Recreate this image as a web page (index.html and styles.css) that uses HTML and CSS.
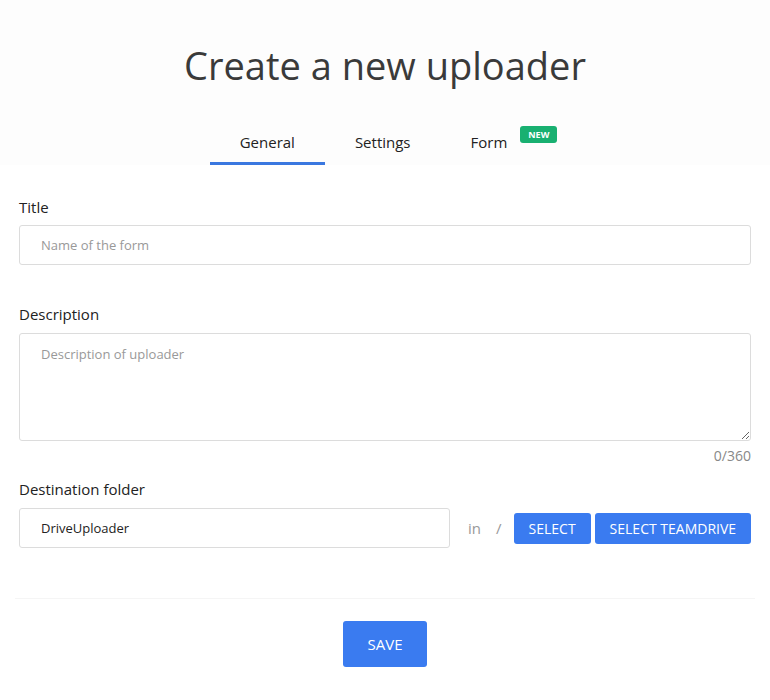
FILE: index.html
```html
<!DOCTYPE html>
<html lang="en">
<head>
<meta charset="utf-8">
<title>Create a new uploader</title>
<link rel="stylesheet" href="styles.css">
</head>
<body>
<header class="header">
  <h1 class="page-title">Create a new uploader</h1>
  <nav class="tabs">
    <div class="tab active">General</div>
    <div class="tab">Settings</div>
    <div class="tab tab-form">Form<span class="badge">NEW</span></div>
  </nav>
</header>
<main class="form">
  <div class="field">
    <label class="label" for="title">Title</label>
    <input class="input" id="title" type="text" placeholder="Name of the form">
  </div>
  <div class="field field-desc">
    <label class="label" for="desc">Description</label>
    <textarea class="input textarea" id="desc" placeholder="Description of uploader"></textarea>
    <div class="counter">0/360</div>
  </div>
  <div class="field field-dest">
    <label class="label" for="dest">Destination folder</label>
    <div class="dest-row">
      <input class="input dest-input" id="dest" type="text" value="DriveUploader">
      <span class="muted in">in</span>
      <span class="muted slash">/</span>
      <button class="btn btn-sm">SELECT</button>
      <button class="btn btn-sm">SELECT TEAMDRIVE</button>
    </div>
  </div>
</main>
<footer class="footer">
  <button class="btn btn-save">SAVE</button>
</footer>
</body>
</html>
```
FILE: styles.css
```css
* { box-sizing: border-box; }
html, body { margin: 0; background: #fff; }
body { font-family: "Open Sans", "Noto Sans", sans-serif; color: #222; }

.header { background: #fdfdfd; padding-top: 38px; text-align: center; }
.page-title { margin: 0; font-size: 38px; line-height: 54px; font-weight: 400; color: #3a3a3a; }
.tabs { display: flex; justify-content: center; margin-top: 24px; }
.tab { display: flex; align-items: flex-start; padding: 15px 30px 9px; font-size: 15px; line-height: 22px; color: #222; border-bottom: 3px solid transparent; white-space: nowrap; }
.tab.active { border-bottom-color: #3a78e0; }
.tab-form { padding-right: 3px; }
.badge { margin-left: 13px; margin-top: -5px; width: 37px; height: 17px; border-radius: 3px; background: #19b071; color: #fff; font-size: 9px; font-weight: 700; line-height: 17px; text-align: center; }

.form { padding: 32px 19px 0; }
.label { display: block; font-size: 15px; line-height: 20px; color: #222; margin-bottom: 8px; }
.input { display: block; width: 100%; height: 40px; border: 1px solid #dcdcdc; border-radius: 3px; padding: 0 21px; font-family: inherit; font-size: 13px; color: #222; background: #fff; outline: none; }
.input::placeholder { color: #999; }
.field-desc { margin-top: 39px; }
.field-desc .label, .field-dest .label { margin-bottom: 9px; }
.textarea { height: 108px; padding: 11px 21px; line-height: 18px; resize: vertical; }
.counter { text-align: right; font-size: 14px; line-height: 20px; color: #888; margin-top: 5px; }
.field-dest { margin-top: 13px; }
.dest-row { display: flex; align-items: center; }
.dest-input { width: 431px; flex: none; }
.muted { color: #999; font-size: 15px; }
.in { margin-left: 18px; }
.slash { margin-left: 15px; margin-right: 12px; }
.btn { border: none; background: #3a7bf0; color: #fff; font-family: inherit; border-radius: 3px; cursor: pointer; white-space: nowrap; }
.btn-sm { flex: none; height: 31px; font-size: 14px; padding: 0 15px; }
.btn-sm + .btn-sm { margin-left: 4px; }

.footer { margin: 50px 15px 0; border-top: 1px solid #f5f5f5; padding-top: 22px; text-align: center; }
.btn-save { height: 46px; width: 84px; font-size: 15px; }
```
